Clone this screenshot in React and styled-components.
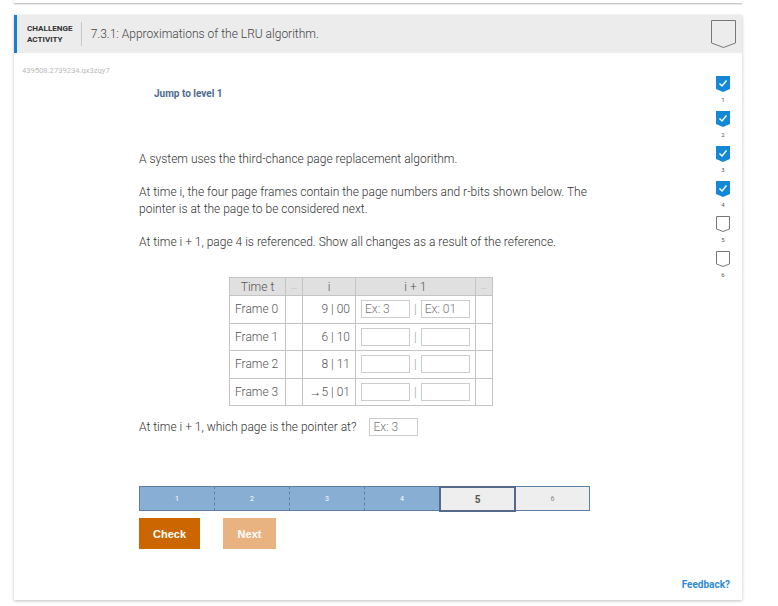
import React from "react";
import styled, { createGlobalStyle } from "styled-components";

const Global = createGlobalStyle`
  html, body { margin: 0; padding: 0; background: #fff; }
  body { font-family: Roboto, "Liberation Sans", Arial, sans-serif; color: #333; }
  * { box-sizing: border-box; }
`;

const Page = styled.div`
  width: 778px;
  height: 606px;
  padding-left: 14px;
  overflow: hidden;
`;

const TopCard = styled.div`
  width: 728px;
  height: 3px;
  background: #fff;
  box-shadow: 0 1px 2px rgba(0,0,0,0.3);
`;

const Card = styled.div`
  width: 728px;
  height: 585px;
  margin-top: 12px;
  background: #fff;
  box-shadow: 0 1px 3px rgba(0,0,0,0.25);
  display: flex;
  flex-direction: column;
`;

const Header = styled.div`
  height: 38px;
  background: #ececec;
  border-left: 3px solid #1a80cc;
  display: flex;
  align-items: center;
  padding-left: 10px;
  padding-right: 6px;
`;

const Kind = styled.div`
  font-size: 8.1px;
  font-weight: 700;
  line-height: 11px;
  color: #333;
  text-transform: uppercase;
  padding-right: 8px;
  border-right: 1px solid #c8c8c8;
  height: 24px;
  display: flex;
  flex-direction: column;
  justify-content: center;
`;

const Title = styled.div`
  flex: 1;
  font-size: 12px;
  font-weight: 300;
  color: #444;
  padding-left: 9px;
`;

const Body = styled.div`
  flex: 1;
  display: flex;
`;

const Main = styled.div`
  flex: 1;
  padding-left: 8px;
  display: flex;
  flex-direction: column;
`;

const Ident = styled.div`
  font-size: 7.6px;
  color: #bbb;
  margin-top: 13px;
  line-height: 10px;
`;

const Jump = styled.div`
  font-size: 10px;
  font-weight: 700;
  color: #4f6a8f;
  margin-left: 132px;
  margin-top: 12px;
  line-height: 12px;
`;

const Content = styled.div`
  margin-left: 117px;
  margin-top: 51px;
  width: 455px;
`;

const Para = styled.p`
  margin: 0 0 16px 0;
  font-size: 12px;
  font-weight: 300;
  line-height: 17px;
  color: #333;
`;

const Table = styled.table`
  border-collapse: collapse;
  margin: 26px 0 0 90px;
  font-size: 12px;
  font-weight: 300;
  color: #555;
  td, th { border: 1px solid #c4c4c4; padding: 0 5px; }
`;

const Th = styled.th`
  background: #e0e0e0;
  font-weight: 300;
  height: 18px;
  width: ${p => p.$w}px;
  text-align: center;
  color: ${p => (p.$dots ? "#777" : "#555")};
  font-size: ${p => (p.$dots ? 8 : 12)}px;
`;

const Td = styled.td`
  height: 27.5px;
  text-align: ${p => p.$align || "left"};
  white-space: nowrap;
`;

const InRow = styled.div`
  display: flex;
  align-items: center;
  gap: 4px;
  color: #999;
`;

const Input = styled.div`
  width: ${p => p.$w || 49}px;
  height: 18px;
  border: 1px solid #ccc;
  font-size: 12px;
  font-weight: 300;
  color: #777;
  padding-left: 3px;
  line-height: 16px;
  background: #fff;
`;

const Question = styled.div`
  display: flex;
  align-items: center;
  gap: 13px;
  margin-top: 12px;
  font-size: 12px;
  font-weight: 300;
  color: #333;
`;

const Progress = styled.div`
  display: flex;
  width: 451px;
  margin-top: 50px;
  height: 25px;
`;

const Seg = styled.div`
  flex: 0 0 ${p => (p.$current ? 77 : 75)}px;
  display: flex;
  align-items: center;
  justify-content: center;
  background: ${p => (p.$done ? "#88aed3" : "#eeeeee")};
  border: 1px solid #5b7fa6;
  border-left: ${p => (p.$first ? "1px solid #5b7fa6" : p.$done ? "1px dashed #5b7fa6" : "none")};
  border-right: none;
  font-size: ${p => (p.$current ? 10 : 7)}px;
  font-weight: ${p => (p.$current ? 700 : 400)};
  color: ${p => (p.$done ? "#fff" : p.$current ? "#555" : "#888")};
  ${p => p.$current && "border: 2px solid #56698a; height: 26px;"}
  ${p => p.$last && "border-right: 1px solid #5b7fa6;"}
`;

const Buttons = styled.div`
  display: flex;
  gap: 23px;
  margin-top: 7px;
`;

const Button = styled.div`
  height: 31px;
  width: ${p => p.$w}px;
  display: flex;
  align-items: center;
  justify-content: center;
  background: ${p => p.$bg};
  color: #fff;
  font-family: "Liberation Sans", Arial, sans-serif;
  font-weight: 700;
  font-size: 11px;
`;

const Side = styled.div`
  width: 14px;
  display: flex;
  flex-direction: column;
  align-items: center;
  padding-top: 23px;
  margin-right: 12px;
`;

const Level = styled.div`
  display: flex;
  flex-direction: column;
  align-items: center;
  height: 35px;
  flex-shrink: 0;
`;

const LevelNum = styled.div`
  font-size: 6px;
  color: #555;
  line-height: 7px;
  margin-top: 4px;
`;

const Feedback = styled.div`
  margin-top: auto;
  margin-bottom: 10px;
  align-self: flex-end;
  font-size: 10px;
  font-weight: 700;
  color: #2b8bd6;
  white-space: nowrap;
`;

const Badge = ({ done }) => (
  <svg width="14" height="16" viewBox="0 0 14 16">
    {done ? (
      <>
        <path d="M0 0 H14 V13 L7 16 L0 13 Z" fill="#1388d6" />
        <path d="M3.5 7.5 L6 10 L10.5 4.5" stroke="#fff" strokeWidth="1.4" fill="none" />
      </>
    ) : (
      <path d="M0.5 0.5 H13.5 V13 L7 15.5 L0.5 13 Z" fill="#fff" stroke="#777" strokeWidth="1" />
    )}
  </svg>
);

const BigBadge = () => (
  <svg width="25" height="28" viewBox="0 0 25 28">
    <path d="M0.5 0.5 H24.5 V23 L12.5 27.5 L0.5 23 Z" fill="none" stroke="#777" strokeWidth="1" />
  </svg>
);

const rows = [
  ["Frame 0", "9 | 00", true],
  ["Frame 1", "6 | 10", false],
  ["Frame 2", "8 | 11", false],
  ["Frame 3", "→5 | 01", false],
];

export default function App() {
  return (
    <Page>
      <Global />
      <TopCard />
      <Card>
        <Header>
          <Kind>
            <span>Challenge</span>
            <span>Activity</span>
          </Kind>
          <Title>7.3.1: Approximations of the LRU algorithm.</Title>
          <BigBadge />
        </Header>
        <Body>
          <Main>
            <Ident>439508.2739234.qx3zqy7</Ident>
            <Jump>Jump to level 1</Jump>
            <Content>
              <Para>A system uses the third-chance page replacement algorithm.</Para>
              <Para>
                At time i, the four page frames contain the page numbers and r-bits shown below. The pointer is at the page to be considered next.
              </Para>
              <Para>At time i + 1, page 4 is referenced. Show all changes as a result of the reference.</Para>
              <Table>
                <thead>
                  <tr>
                    <Th $w={56}>Time t</Th>
                    <Th $w={17} $dots>...</Th>
                    <Th $w={53}>i</Th>
                    <Th $w={119}>i + 1</Th>
                    <Th $w={17} $dots>...</Th>
                  </tr>
                </thead>
                <tbody>
                  {rows.map(([f, v, ex]) => (
                    <tr key={f}>
                      <Td>{f}</Td>
                      <Td />
                      <Td $align="right">{v}</Td>
                      <Td>
                        <InRow>
                          <Input>{ex ? "Ex: 3" : ""}</Input>
                          |
                          <Input>{ex ? "Ex: 01" : ""}</Input>
                        </InRow>
                      </Td>
                      <Td />
                    </tr>
                  ))}
                </tbody>
              </Table>
              <Question>
                <span>At time i + 1, which page is the pointer at?</span>
                <Input>Ex: 3</Input>
              </Question>
              <Progress>
                <Seg $done $first>1</Seg>
                <Seg $done>2</Seg>
                <Seg $done>3</Seg>
                <Seg $done>4</Seg>
                <Seg $current>5</Seg>
                <Seg $last style={{ flexBasis: 74 }}>6</Seg>
              </Progress>
              <Buttons>
                <Button $bg="#cc6600" $w={61}>Check</Button>
                <Button $bg="#e8b380" $w={53}>Next</Button>
              </Buttons>
            </Content>
          </Main>
          <Side>
            {[1, 2, 3, 4, 5, 6].map(n => (
              <Level key={n}>
                <Badge done={n <= 4} />
                <LevelNum>{n}</LevelNum>
              </Level>
            ))}
            <Feedback>Feedback?</Feedback>
          </Side>
        </Body>
      </Card>
    </Page>
  );
}
